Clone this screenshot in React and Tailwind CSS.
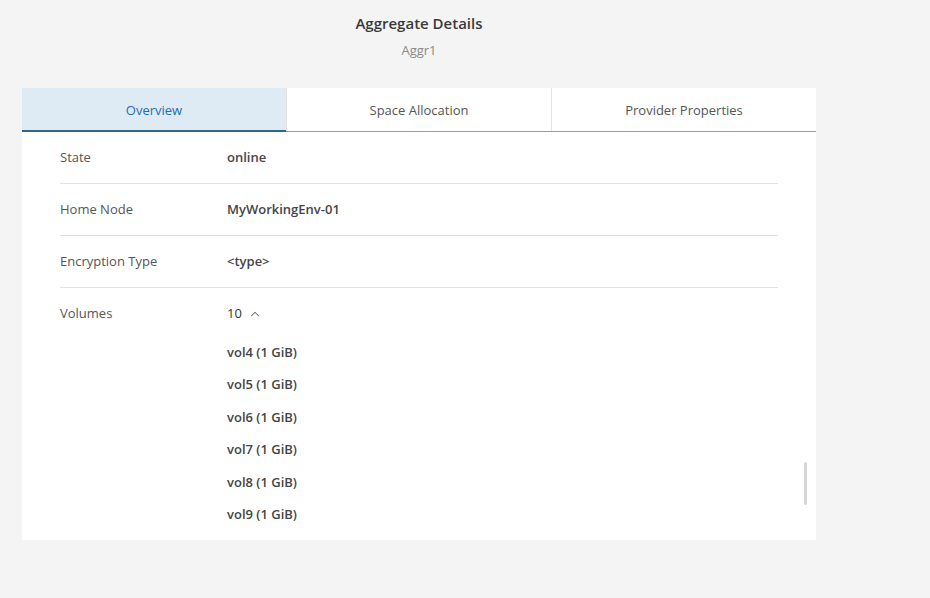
import React from 'react';
import { ChevronUp } from 'lucide-react';

const rows = [
  { label: 'State', value: 'online' },
  { label: 'Home Node', value: 'MyWorkingEnv-01' },
  { label: 'Encryption Type', value: '<type>' },
];

const volumes = ['vol4', 'vol5', 'vol6', 'vol7', 'vol8', 'vol9'];

const tabs = ['Overview', 'Space Allocation', 'Provider Properties'];

const App = () => {
  return (
    <div className="w-[930px] h-[598px] bg-[#f4f4f4] font-['Open_Sans',sans-serif] text-[13px] text-[#333] overflow-hidden">
      <div className="w-[794px] ml-[22px]">
        <div className="flex flex-col items-center pt-[13px] h-[88px]">
          <h1 className="text-[15px] font-semibold text-[#3a3a3a] leading-5">Aggregate Details</h1>
          <p className="text-[13px] text-[#8a8a8a] mt-[7px] leading-5">Aggr1</p>
        </div>

        <div className="relative bg-white h-[452px]">
          <div className="flex h-[44px] border-b border-[#9a9a9a]">
            {tabs.map((t, i) => (
              <div
                key={t}
                className={
                  i === 0
                    ? 'flex-1 flex items-center justify-center pt-[4px] bg-[#deeaf4] text-[#1a6fb5] border-b-2 border-[#2b6a86] -mb-px'
                    : 'flex-1 flex items-center justify-center pt-[3px] text-[#555] border-l border-[#e2e2e2]'
                }
              >
                {t}
              </div>
            ))}
          </div>

          <div className="px-[38px]">
            {rows.map((r) => (
              <div key={r.label} className="flex items-center h-[52px] border-b border-[#e2e2e2]">
                <div className="w-[167px] text-[#555]">{r.label}</div>
                <div className="font-semibold text-[#454545]">{r.value}</div>
              </div>
            ))}
            <div className="flex items-center h-[48px] pt-[3px]">
              <div className="w-[167px] text-[#555]">Volumes</div>
              <div className="flex items-center gap-[6px] text-[#333]">
                <span>10</span>
                <ChevronUp size={14} strokeWidth={1.75} className="text-[#666]" />
              </div>
            </div>
            <div className="pl-[167px]">
              {volumes.map((v) => (
                <div key={v} className="h-[32.5px] flex items-center font-semibold text-[#454545]">
                  {v} (1 GiB)
                </div>
              ))}
            </div>
          </div>

          <div className="absolute left-[782px] top-[374px] w-[3px] h-[43px] rounded bg-[#d6d6d6]" />
        </div>
      </div>
    </div>
  );
};

export default App;
